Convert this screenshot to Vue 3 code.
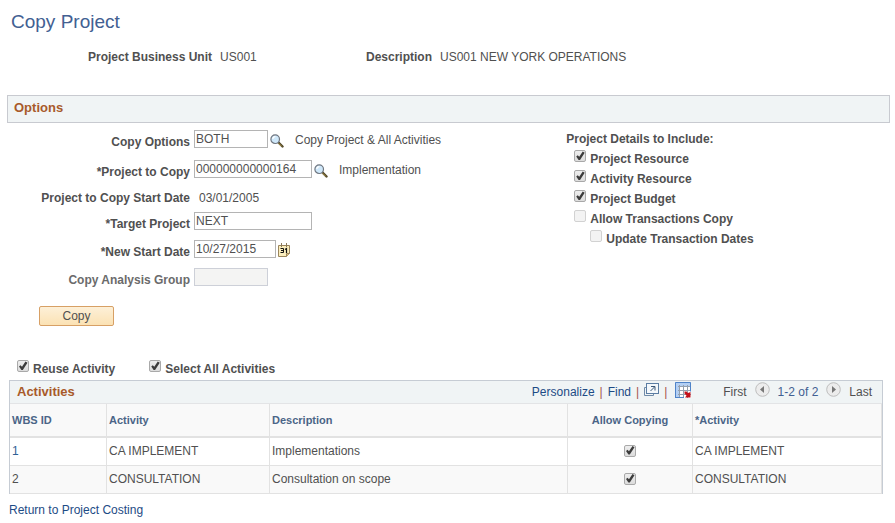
<template>
  <main class="page">
    <h1>Copy Project</h1>

    <dl class="summary">
      <div>
        <dt>Project Business Unit</dt>
        <dd>US001</dd>
      </div>
      <div>
        <dt>Description</dt>
        <dd>US001 NEW YORK OPERATIONS</dd>
      </div>
    </dl>

    <h2 class="section-bar">Options</h2>

    <form @submit.prevent>
      <div class="options">
        <div class="fields">
          <label for="copy-options">Copy Options</label>
          <div class="field">
            <input id="copy-options" v-model="form.copyOptions" class="short" type="text" />
            <button class="icon-button lookup" type="button" aria-label="Look up Copy Options">
              <svg width="14" height="14" viewBox="0 0 14 14">
                <path d="M8.5 8.5l4 4" stroke="#4d4426" stroke-width="2.4" stroke-linecap="round" />
                <path d="M8.600 9.200l3.2 3.2" stroke="#c0a550" stroke-width="0.9" />
                <circle cx="5.2" cy="5.2" r="4.3" fill="#cfe8fa" stroke="#6f7680" stroke-width="1.2" />
                <path d="M2.8 5a2.6 2.6 0 0 1 2.6-2.4" fill="none" stroke="#fff" stroke-width="1.2" />
              </svg>
            </button>
            <span class="hint">Copy Project &amp; All Activities</span>
          </div>

          <label for="source-project">*Project to Copy</label>
          <div class="field">
            <input id="source-project" v-model="form.sourceProject" class="long" type="text" />
            <button class="icon-button lookup" type="button" aria-label="Look up Project to Copy">
              <svg width="14" height="14" viewBox="0 0 14 14">
                <path d="M8.5 8.5l4 4" stroke="#4d4426" stroke-width="2.4" stroke-linecap="round" />
                <path d="M8.600 9.200l3.2 3.2" stroke="#c0a550" stroke-width="0.9" />
                <circle cx="5.2" cy="5.2" r="4.3" fill="#cfe8fa" stroke="#6f7680" stroke-width="1.2" />
                <path d="M2.8 5a2.6 2.6 0 0 1 2.6-2.4" fill="none" stroke="#fff" stroke-width="1.2" />
              </svg>
            </button>
            <span class="hint">Implementation</span>
          </div>

          <span class="caption">Project to Copy Start Date</span>
          <span class="static">03/01/2005</span>

          <label for="target-project">*Target Project</label>
          <div class="field">
            <input id="target-project" v-model="form.targetProject" class="long" type="text" />
          </div>

          <label for="start-date">*New Start Date</label>
          <div class="field">
            <input id="start-date" v-model="form.startDate" class="date" type="text" />
            <button class="icon-button" type="button" aria-label="Choose a date">
              <svg width="12" height="14" viewBox="0 0 12 14">
                <path d="M.5 2.5h11v8l-3 3h-8z" fill="#fbeebd" stroke="#9a855c" />
                <path d="M11.5 10.5h-3v3" fill="#d9bd7c" stroke="#9a855c" />
                <path d="M3.5 0v4M8.5 0v4" stroke="#8b7a5a" />
                <path d="M2.5 5.5h3v4h-3M3 7.5h2" fill="none" stroke="#111" />
                <path d="M7 6.5l1.5-1v4.5" fill="none" stroke="#111" stroke-width="1.2" />
              </svg>
            </button>
          </div>

          <label for="analysis-group" class="muted">Copy Analysis Group</label>
          <div class="field">
            <input id="analysis-group" class="short" type="text" disabled />
          </div>
        </div>

        <fieldset class="details">
          <legend>Project Details to Include:</legend>
          <label
            v-for="item in details"
            :key="item.label"
            class="check"
            :class="{ nested: item.nested }"
          >
            <input v-model="item.checked" type="checkbox" :disabled="item.disabled" />
            <span>{{ item.label }}</span>
          </label>
        </fieldset>
      </div>

      <button class="copy" type="submit">Copy</button>

      <div class="toggles">
        <label class="check">
          <input v-model="reuseActivity" type="checkbox" />
          <span>Reuse Activity</span>
        </label>
        <label class="check">
          <input v-model="selectAll" type="checkbox" @change="toggleAll" />
          <span>Select All Activities</span>
        </label>
      </div>
    </form>

    <section class="activities">
      <header>
        <h2>Activities</h2>
        <nav class="tools">
          <a href="#">Personalize</a>
          <i>|</i>
          <a href="#">Find</a>
          <i>|</i>
          <a href="#" class="popup" aria-label="View all">
            <svg width="15" height="14" viewBox="0 0 15 14">
              <path d="M2.5 4.5h-2v8h9v-2" fill="none" stroke="#6f8aa8" />
              <rect x="2.5" y=".5" width="12" height="10" fill="#f4f8fb" stroke="#5b7da3" />
              <path d="M6.5 8l4-4M7 3.5h4v4" fill="none" stroke="#3c5878" />
            </svg>
          </a>
          <i>|</i>
          <a href="#" class="download" aria-label="Download">
            <svg width="16" height="16" viewBox="0 0 16 16">
              <rect width="16" height="16" fill="#fff" />
              <path d="M0 0h16v4H0zM0 0h4v16H0z" fill="#b3cff3" />
              <path d="M4.5 3v13M8.5 3v13M12.5 3v13M3 4.5h13M3 8.5h13M3 12.5h13" stroke="#94a0ae" />
              <path d="M.5 15.5V.5h15v9" fill="none" stroke="#4f83c8" />
              <path d="M0 15.5h9" stroke="#4f83c8" />
              <path d="M9.500 9.500h2l1.500 1.500 2.500-1v5.500h-5.500l1.500-2-2-2z" fill="#c4101a" />
            </svg>
          </a>
        </nav>
        <div class="pager">
          <span>First</span>
          <button type="button" aria-label="Previous">
            <svg width="15" height="15" viewBox="0 0 15 15">
              <circle cx="7.500" cy="7.500" r="6.800" fill="#ececec" stroke="#bdbdbd" />
              <path d="M9 4v7L5 7.500z" fill="#777" />
            </svg>
          </button>
          <span class="range">1-2 of 2</span>
          <button type="button" aria-label="Next">
            <svg width="15" height="15" viewBox="0 0 15 15">
              <circle cx="7.500" cy="7.500" r="6.800" fill="#ececec" stroke="#bdbdbd" />
              <path d="M6 4v7l4-3.500z" fill="#777" />
            </svg>
          </button>
          <span>Last</span>
        </div>
      </header>
      <table>
        <thead>
          <tr>
            <th class="col-id">WBS ID</th>
            <th class="col-activity">Activity</th>
            <th>Description</th>
            <th class="col-allow">Allow Copying</th>
            <th class="col-target">*Activity</th>
          </tr>
        </thead>
        <tbody>
          <tr v-for="row in rows" :key="row.id">
            <td>
              <a v-if="row.id === 1" href="#">{{ row.id }}</a>
              <template v-else>{{ row.id }}</template>
            </td>
            <td>{{ row.activity }}</td>
            <td>{{ row.description }}</td>
            <td class="allow">
              <input v-model="row.allow" type="checkbox" :aria-label="'Allow Copying ' + row.activity" />
            </td>
            <td>{{ row.activity }}</td>
          </tr>
        </tbody>
      </table>
    </section>

    <a class="return" href="#">Return to Project Costing</a>
  </main>
</template>

<script setup>
import { reactive, ref } from "vue";

const form = reactive({
  copyOptions: "BOTH",
  sourceProject: "000000000000164",
  targetProject: "NEXT",
  startDate: "10/27/2015",
});

const details = ref([
  { label: "Project Resource", checked: true },
  { label: "Activity Resource", checked: true },
  { label: "Project Budget", checked: true },
  { label: "Allow Transactions Copy", checked: false, disabled: true },
  { label: "Update Transaction Dates", checked: false, disabled: true, nested: true },
]);

const rows = ref([
  { id: 1, activity: "CA IMPLEMENT", description: "Implementations", allow: true },
  { id: 2, activity: "CONSULTATION", description: "Consultation on scope", allow: true },
]);

const reuseActivity = ref(true);
const selectAll = ref(true);

// Tick or clear every row at once
const toggleAll = () => {
  rows.value.forEach((row) => {
    row.allow = selectAll.value;
  });
};
</script>

<style>
body {
  margin: 0;
  background: #fff;
}
</style>

<style scoped>
.page {
  padding: 10px 5px 4px 7px;
  font: 12px/16px "Liberation Sans", Arial, sans-serif;
  color: #505050;
}
h1 {
  margin: 0 0 0 4px;
  font-size: 19px;
  line-height: 24px;
  font-weight: normal;
  color: #426092;
}
.summary {
  display: grid;
  grid-template-columns: 278px 1fr;
  margin: 15px 0 30px 81px;
}
.summary div {
  display: flex;
  gap: 8px;
}
dt {
  font-weight: bold;
}
dd {
  margin: 0;
}
h2 {
  margin: 0;
  font-size: 13px;
  color: #a85a2a;
}
.section-bar {
  padding: 0 6px;
  line-height: 24px;
  padding-bottom: 2px;
  background: #f0f4f5;
  border: 1px solid #c8cad0;
}
.options {
  display: grid;
  grid-template-columns: 19fr 11fr;
  padding-top: 7px;
}
.fields {
  display: grid;
  grid-template-columns: 183px 1fr;
  grid-template-rows: 30px 30px 22px 28px 28px 18px;
  column-gap: 4px;
}
.fields > label,
.caption {
  padding-top: 4px;
  text-align: right;
  font-weight: bold;
  white-space: nowrap;
}
.fields > .caption,
.static {
  padding-top: 0;
}
.fields > .muted {
  color: #6b6b6b;
}
.static {
  padding-left: 5px;
}
.field {
  display: flex;
  align-items: flex-start;
}
input[type="text"] {
  box-sizing: border-box;
  height: 18px;
  padding: 0 1px 1px;
  border: 1px solid #b4b4b4;
  border-radius: 0;
  background: #fff;
  font: inherit;
  color: #505050;
}
input[type="text"]:disabled {
  background: #f4f4f3;
  border-color: #cdd0d8;
}
.short {
  width: 74px;
}
.long {
  width: 118px;
}
.date {
  width: 82px;
}
button {
  padding: 0;
  border: 0;
  background: none;
  font: inherit;
  color: inherit;
  cursor: pointer;
}
svg {
  display: block;
}
.icon-button {
  margin: 3px 0 0 2px;
}
.lookup {
  margin-top: 4px;
}
.hint {
  padding-top: 2px;
  margin-left: 11px;
}
.details {
  margin: 0;
  padding: 0;
  border: 0;
}
legend {
  padding: 1px 0 2px;
  font-weight: bold;
}
.check {
  display: flex;
  gap: 4px;
  height: 20px;
  font-weight: bold;
}
.details .check {
  margin-left: 8px;
}
.details .nested {
  margin-left: 24px;
}
.check span {
  padding-top: 2px;
}
input[type="checkbox"] {
  appearance: none;
  flex: none;
  box-sizing: border-box;
  width: 12px;
  height: 12px;
  margin: 1px 0 0;
  border: 1px solid #a9a9a9;
  border-radius: 2px;
  background: linear-gradient(#eee, #dcdcdc);
}
input[type="checkbox"]:disabled {
  border-color: #d2d2d2;
  background: #f3f3f3;
}
input[type="checkbox"]:checked::after {
  content: "";
  display: block;
  width: 10px;
  height: 10px;
  background: #3c3c3c;
  clip-path: polygon(10% 55%, 25% 42%, 40% 58%, 75% 5%, 95% 18%, 48% 90%, 34% 90%);
}
.copy {
  display: block;
  width: 75px;
  height: 20px;
  margin: 20px 0 0 32px;
  border: 1px solid #d7a065;
  border-radius: 2px;
  background: linear-gradient(#fdf0d8, #fbe2b4);
}
.toggles {
  display: flex;
  gap: 34px;
  padding: 33px 0 1px 10px;
}
.activities {
  margin: 0 7px 0 2px;
  border: 1px solid #c6ccd4;
  border-bottom: 0;
}
.activities header {
  display: flex;
  align-items: center;
  height: 22px;
  padding: 0 10px 0 7px;
  background: #f0f4f5;
  border-bottom: 1px solid #e3e4e6;
}
a {
  color: #1d4b85;
  text-decoration: none;
}
.tools {
  display: flex;
  align-items: center;
  gap: 5px;
  margin-left: auto;
}
.tools i {
  font-style: normal;
  color: #a4524c;
}
.tools .popup,
.tools .download {
  margin-bottom: 4px;
}
.tools .download {
  margin-left: 3px;
}
.pager {
  display: flex;
  align-items: center;
  gap: 8px;
  margin-left: 32px;
}
.pager button {
  margin-bottom: 6px;
}
.range {
  color: #426092;
}
table {
  width: 100%;
  margin-bottom: -4px;
  table-layout: fixed;
  border-spacing: 0;
}
th,
td {
  padding: 0 2px;
  text-align: left;
  border-right: 1px solid #e2e2e2;
  border-bottom: 1px solid #e2e2e2;
}
th {
  height: 32px;
  font-size: 11px;
  color: #4b6587;
  background: #f9f9f9;
  border-bottom-width: 2px;
}
td {
  height: 25px;
  padding-bottom: 2px;
}
tbody tr:nth-child(even) {
  background: #f9f9f9;
}
td a {
  color: #2f6195;
}
.col-id {
  width: 92px;
}
.col-activity {
  width: 158px;
}
.col-allow {
  width: 120px;
}
.col-target {
  width: 184px;
}
.col-allow,
.allow {
  text-align: center;
}
.allow input {
  display: block;
  margin: 0 auto;
}
.return {
  display: inline-block;
  margin: 12px 0 0 2px;
}
</style>
